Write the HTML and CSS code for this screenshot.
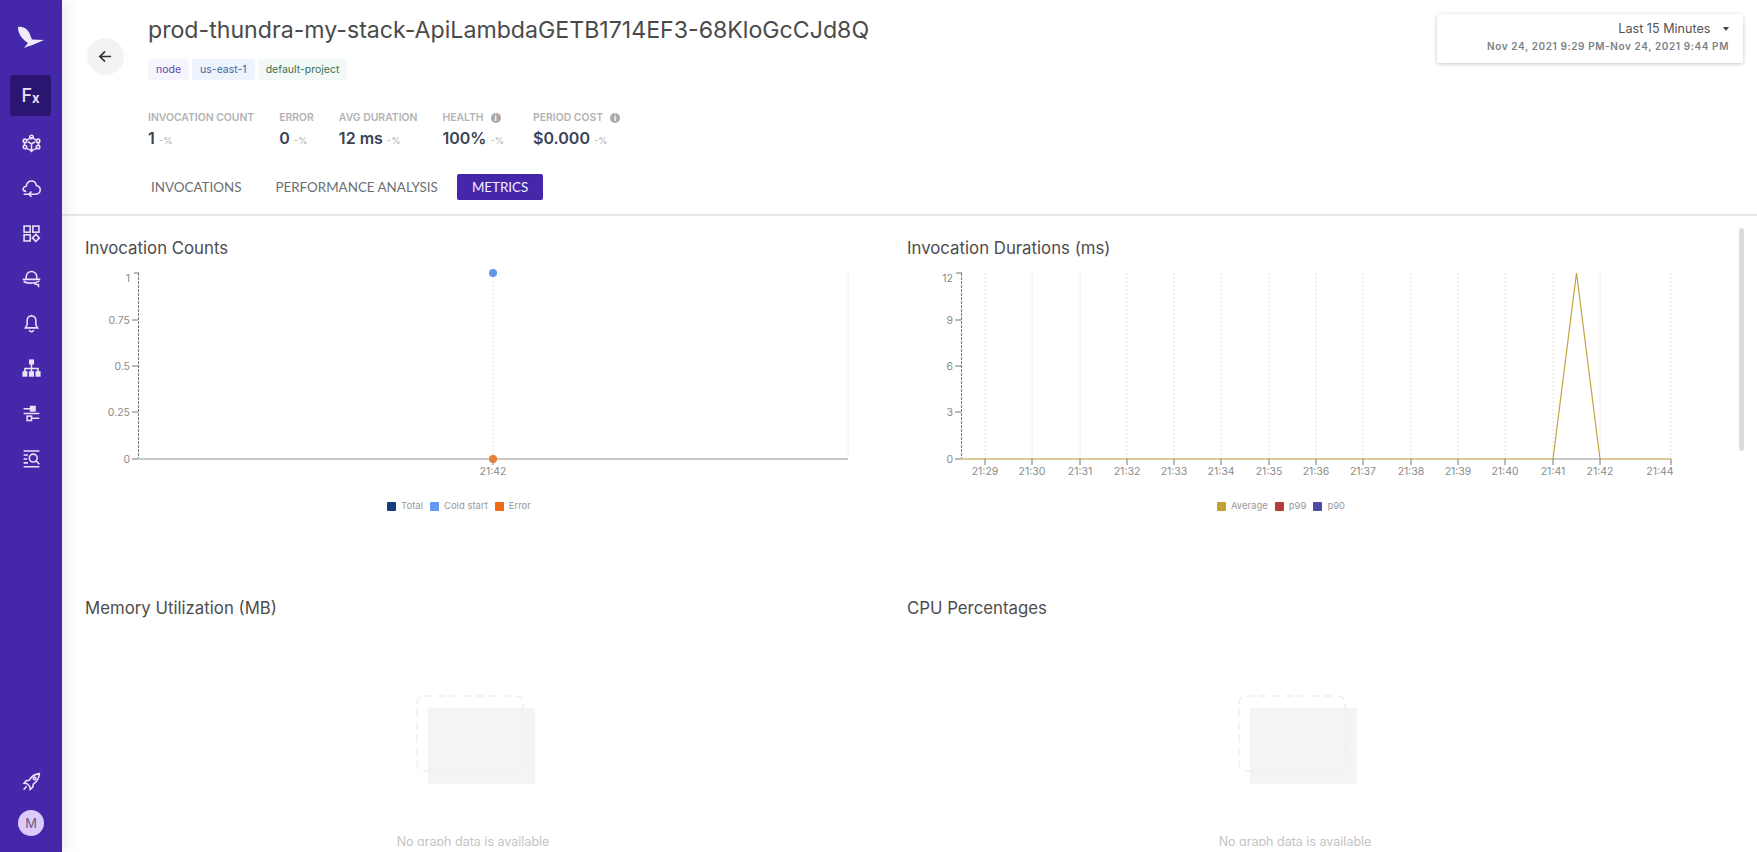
FILE: index.html
```html
<!DOCTYPE html>
<html lang="en">
<head>
    <meta charset="UTF-8">
    <meta name="viewport" content="width=device-width, initial-scale=1.0">
    <title>Function Metrics</title>
    <link rel="stylesheet" href="styles.css">
</head>
<body>
    <div class="app">
        <!-- Left navigation -->
        <nav class="sidebar">
            <svg class="logo" viewBox="0 0 26 22"><path d="M0 1C6 0 11 4 12.500 10L14 13.500 26 14C20 17 11 20 6 22L10 17C4 13 0 8 0 1Z"/></svg>
            <div class="fx-item">F<span>x</span></div>
            <a class="nav-item"><svg viewBox="0 0 24 24"><path d="M12 5l6 3.500M12 5L6 8.500M4 10v5M20 10v5M6.500 17.500L9 19M17.500 17.500L15 19"/><circle cx="12" cy="4.500" r="2"/><circle cx="4.500" cy="9" r="2"/><circle cx="19.500" cy="9" r="2"/><circle cx="4.500" cy="16" r="2"/><circle cx="19.500" cy="16" r="2"/><path d="M8 10l4 2.500 4-2.500M12 12.500V21M9.500 18.500L12 21l2.500-2.500"/></svg></a>
            <a class="nav-item"><svg viewBox="0 0 24 24"><path d="M6 15.500C3 15 2 13.500 2.500 12 3 10.500 4.500 9.500 6 9.500 6.500 6 9 3.500 12 3.500c3 0 5 2 5.500 5 2.500.5 4.500 2.500 4.500 5 0 3-2.500 5-5 5h-8"/><path d="M12 15.500L9 18.500l3 3M9 18.500H3"/></svg></a>
            <a class="nav-item"><svg viewBox="0 0 24 24"><rect x="3.500" y="3.500" width="7" height="7"/><rect x="13.500" y="3.500" width="7" height="7"/><rect x="3.500" y="13.500" width="7" height="7"/><path d="M17 13l4 4-4 4-4-4z"/></svg></a>
            <a class="nav-item"><svg viewBox="0 0 24 24"><path d="M6 13V10a6 6 0 0 1 12 0v3"/><path d="M2 13h20M3 15c3 3 12 3 18 0M15 18l5 1v3"/></svg></a>
            <a class="nav-item"><svg viewBox="0 0 24 24"><path d="M12 3.500c-3.500 0-5 2.500-5 5.500v4.500L5 17h14l-2-3.500V9c0-3-1.500-5.500-5-5.500zM12 2v1.500M9.500 19.500c.5 1.500 1.500 2 2.500 2s2-.5 2.500-2"/></svg></a>
            <a class="nav-item"><svg viewBox="0 0 24 24"><rect x="10" y="2.500" width="4" height="4" fill="currentColor"/><path d="M12 6.500V16M4.500 16v-4h15v4"/><rect x="2.500" y="16" width="4" height="4.500" fill="currentColor"/><rect x="10" y="16" width="4" height="4.500" fill="currentColor"/><rect x="17.500" y="16" width="4" height="4.500" fill="currentColor"/></svg></a>
            <a class="nav-item"><svg viewBox="0 0 24 24"><path d="M3 6.500h8M3 12h18M12 17.500h9"/><rect x="11" y="4" width="5" height="5" fill="currentColor"/><rect x="7" y="15" width="5" height="5"/></svg></a>
            <a class="nav-item"><svg viewBox="0 0 24 24"><path d="M3 3.500h18M3 8h5M3 12.500h4M3 17h5M3 21.500h18"/><circle cx="14" cy="11.500" r="4.500"/><path d="M17.500 15l3.500 3.500"/></svg></a>
            <a class="nav-item rocket"><svg viewBox="0 0 24 24"><path d="M21 3c-5 .5-9 3-11.500 7.500L6 11l-2.500 3 3.500.5 3 3 .5 3.500 3-2.500.5-3.500C18.500 12 20.500 8 21 3zM6.500 17.500L3 21.500"/><circle cx="15.500" cy="8.500" r="1.500"/></svg></a>
            <div class="avatar">M</div>
        </nav>

        <main class="main">
            <header class="page-header">
                <div class="header-top">
                    <button class="back-btn">
                        <svg viewBox="0 0 16 16"><path d="M14 8H2.500M7.500 2.500L2 8l5.500 5.500"/></svg>
                    </button>
                    <div class="title-block">
                        <h1>prod-thundra-my-stack-ApiLambdaGETB1714EF3-68KloGcCJd8Q</h1>
                        <div class="tags">
                            <span class="tag tag-runtime">node</span>
                            <span class="tag tag-region">us-east-1</span>
                            <span class="tag tag-project">default-project</span>
                        </div>
                    </div>
                    <div class="date-box">
                        <div class="date-range">Last 15 Minutes <span class="caret"></span></div>
                        <div class="date-detail">Nov 24, 2021 9:29 PM-Nov 24, 2021 9:44 PM</div>
                    </div>
                </div>

                <div class="stats">
                    <div class="stat">
                        <div class="stat-label">INVOCATION COUNT</div>
                        <div class="stat-value">1 <small>-%</small></div>
                    </div>
                    <div class="stat">
                        <div class="stat-label">ERROR</div>
                        <div class="stat-value">0 <small>-%</small></div>
                    </div>
                    <div class="stat">
                        <div class="stat-label">AVG DURATION</div>
                        <div class="stat-value">12 ms <small>-%</small></div>
                    </div>
                    <div class="stat stat-health">
                        <div class="stat-label">HEALTH <span class="info">i</span></div>
                        <div class="stat-value">100% <small>-%</small></div>
                    </div>
                    <div class="stat">
                        <div class="stat-label">PERIOD COST <span class="info">i</span></div>
                        <div class="stat-value">$0.000 <small>-%</small></div>
                    </div>
                </div>

                <div class="tabs">
                    <a class="tab">INVOCATIONS</a>
                    <a class="tab">PERFORMANCE ANALYSIS</a>
                    <a class="tab active">METRICS</a>
                </div>
            </header>

            <section class="content">
                <div class="panel">
                    <h2>Invocation Counts</h2>
                    <svg class="chart" viewBox="85 259 790 231">
                        <g class="grid">
                            <path d="M493 273V459M848 273V459"/>
                        </g>
                        <path class="axis-y" d="M138.500 273V459"/>
                        <path class="tick" d="M134 273h5M132 320h6M132 366h6M132 412h6M132 459h6"/>
                        <path class="axis-x" d="M138 459H848"/>
                        <g class="y-labels">
                            <text x="130" y="282">1</text>
                            <text x="130" y="324">0.75</text>
                            <text x="130" y="370">0.5</text>
                            <text x="130" y="416">0.25</text>
                            <text x="130" y="463">0</text>
                        </g>
                        <path class="tick" d="M493 459v6"/>
                        <circle cx="493" cy="273" r="4" fill="#6b94e6"/>
                        <circle cx="493" cy="459" r="4" fill="#e8813a"/>
                        <text class="x-label" x="493" y="475">21:42</text>
                    </svg>
                    <div class="legend">
                        <span class="legend-item"><i class="swatch swatch-total"></i>Total</span>
                        <span class="legend-item"><i class="swatch swatch-cold"></i>Cold start</span>
                        <span class="legend-item"><i class="swatch swatch-error"></i>Error</span>
                    </div>
                </div>

                <div class="panel">
                    <h2>Invocation Durations (ms)</h2>
                    <svg class="chart" viewBox="907 259 790 231">
                        <g class="grid">
                            <path d="M985 273V459M1032 273V459M1080 273V459M1127 273V459M1174 273V459M1221 273V459M1269 273V459M1316 273V459M1363 273V459M1411 273V459M1458 273V459M1505 273V459M1553 273V459M1600 273V459M1671 273V459"/>
                        </g>
                        <path class="axis-y" d="M961.500 273V459"/>
                        <path class="tick" d="M956 273h6M955 320h6M955 366h6M955 412h6M955 459h6"/>
                        <g class="y-labels">
                            <text x="953" y="282">12</text>
                            <text x="953" y="324">9</text>
                            <text x="953" y="370">6</text>
                            <text x="953" y="416">3</text>
                            <text x="953" y="463">0</text>
                        </g>
                        <path class="axis-x" d="M1553 459H1600"/>
                        <path class="series-base" d="M961 459H1553M1600 459H1671"/>
                        <path class="tick" d="M985 459v6M1032 459v6M1080 459v6M1127 459v6M1174 459v6M1221 459v6M1269 459v6M1316 459v6M1363 459v6M1411 459v6M1458 459v6M1505 459v6M1553 459v6M1600 459v6M1671 459v6"/>
                        <path class="series-line" d="M1553 459L1576.500 273 1600 459"/>
                        <g class="x-labels">
                            <text x="985" y="475">21:29</text>
                            <text x="1032" y="475">21:30</text>
                            <text x="1080" y="475">21:31</text>
                            <text x="1127" y="475">21:32</text>
                            <text x="1174" y="475">21:33</text>
                            <text x="1221" y="475">21:34</text>
                            <text x="1269" y="475">21:35</text>
                            <text x="1316" y="475">21:36</text>
                            <text x="1363" y="475">21:37</text>
                            <text x="1411" y="475">21:38</text>
                            <text x="1458" y="475">21:39</text>
                            <text x="1505" y="475">21:40</text>
                            <text x="1553" y="475">21:41</text>
                            <text x="1600" y="475">21:42</text>
                            <text x="1660" y="475">21:44</text>
                        </g>
                    </svg>
                    <div class="legend">
                        <span class="legend-item"><i class="swatch swatch-avg"></i>Average</span>
                        <span class="legend-item"><i class="swatch swatch-p99"></i>p99</span>
                        <span class="legend-item"><i class="swatch swatch-p90"></i>p90</span>
                    </div>
                </div>

                <div class="panel">
                    <h2>Memory Utilization (MB)</h2>
                    <div class="empty">
                        <svg class="empty-art" viewBox="0 0 120 90"><rect x="12" y="13" width="107" height="76" fill="#f4f4f4"/><rect x="1" y="1" width="106" height="75" rx="7" class="empty-dash"/></svg>
                        <p>No graph data is available</p>
                    </div>
                </div>

                <div class="panel">
                    <h2>CPU Percentages</h2>
                    <div class="empty">
                        <svg class="empty-art" viewBox="0 0 120 90"><rect x="12" y="13" width="107" height="76" fill="#f4f4f4"/><rect x="1" y="1" width="106" height="75" rx="7" class="empty-dash"/></svg>
                        <p>No graph data is available</p>
                    </div>
                </div>

                <div class="scroll-thumb"></div>
            </section>
        </main>
    </div>
</body>
</html>
```

FILE: styles.css
```css
* {
    box-sizing: border-box;
}

body {
    margin: 0;
    font-family: Inter, "Liberation Sans", sans-serif;
    background-color: #fff;
    overflow: hidden;
}

.app {
    display: flex;
    height: 100vh;
}

/* Sidebar */
.sidebar {
    width: 62px;
    flex-shrink: 0;
    background-color: #4527a9;
    box-shadow: 3px 0 14px rgba(0, 0, 0, 0.1);
    display: flex;
    flex-direction: column;
    align-items: center;
    color: #e8e1f8;
    z-index: 2;
}

.logo {
    width: 26px;
    height: 22px;
    margin-top: 26px;
    margin-bottom: 27px;
    fill: #f1ecfb;
}

.fx-item {
    width: 41px;
    height: 41px;
    margin-right: 1px;
    background-color: #2a1670;
    border-radius: 3px;
    display: flex;
    align-items: center;
    justify-content: center;
    font-size: 18px;
    font-weight: 500;
    margin-bottom: 5px;
}

.fx-item span {
    font-size: 13px;
    font-weight: 700;
    margin-top: 4px;
}

.nav-item {
    width: 45px;
    height: 45px;
    display: flex;
    align-items: center;
    justify-content: center;
}

.nav-item svg {
    width: 21px;
    height: 21px;
    fill: none;
    stroke: currentColor;
    stroke-width: 1.800;
}

.rocket {
    margin-top: auto;
}

.avatar {
    width: 26px;
    height: 26px;
    border-radius: 50%;
    background-color: #dccafb;
    color: #6a5a80;
    font-size: 13px;
    display: flex;
    align-items: center;
    justify-content: center;
    margin-top: 6px;
    margin-bottom: 16px;
}

/* Main */
.main {
    flex: 1;
    min-width: 0;
    display: flex;
    flex-direction: column;
}

.page-header {
    height: 216px;
    flex-shrink: 0;
    border-bottom: 2px solid #e8e7ee;
    padding-left: 25px;
}

.header-top {
    display: flex;
    align-items: flex-start;
    height: 97px;
    padding-right: 14px;
}

.back-btn {
    width: 37px;
    height: 37px;
    border: none;
    border-radius: 50%;
    background-color: #f3f3f3;
    margin-top: 38px;
    margin-right: 24px;
    padding: 0;
    display: flex;
    align-items: center;
    justify-content: center;
}

.back-btn svg {
    width: 15px;
    height: 15px;
    fill: none;
    stroke: #333;
    stroke-width: 1.800;
}

.title-block {
    padding-top: 12px;
}

h1 {
    margin: 0;
    font-size: 23.150px;
    line-height: 36px;
    font-weight: 400;
    color: #4a4a4a;
}

.tags {
    display: flex;
    gap: 3px;
    margin-top: 11px;
}

.tag {
    font-size: 10.500px;
    height: 21px;
    line-height: 21px;
    padding: 0 8px;
    border-radius: 3px;
}

.tag-runtime {
    background-color: #f6f4fd;
    color: #5b48ad;
}

.tag-region {
    background-color: #edf4fd;
    color: #44649f;
}

.tag-project {
    background-color: #f2f9f6;
    color: #3c6f58;
}

.date-box {
    margin-left: auto;
    margin-top: 14px;
    width: 306px;
    height: 49px;
    border-radius: 2px;
    background-color: #fff;
    box-shadow: 0 1px 4px rgba(0, 0, 0, 0.22);
    text-align: right;
    padding: 6px 14px;
}

.date-range {
    font-size: 12.600px;
    line-height: 17px;
    color: #555;
}

.caret {
    display: inline-block;
    width: 0;
    height: 0;
    margin-left: 9px;
    margin-bottom: 2px;
    border-left: 3.500px solid transparent;
    border-right: 3.500px solid transparent;
    border-top: 4px solid #444;
}

.date-detail {
    font-size: 10px;
    line-height: 14px;
    font-weight: 600;
    letter-spacing: 0.6px;
    color: #7c7f86;
    margin-top: 2px;
}

/* Stats */
.stats {
    display: flex;
    gap: 25px;
    margin-left: 61px;
    margin-top: 14px;
}

.stat-health {
    margin-right: 4px;
}

.stat-label {
    font-size: 10.400px;
    line-height: 14px;
    font-weight: 600;
    color: #b3b3b3;
    display: flex;
    align-items: center;
    gap: 7px;
}

.info {
    width: 10px;
    height: 10px;
    border-radius: 50%;
    background-color: #a9a9a9;
    color: #fff;
    font-size: 8px;
    line-height: 10px;
    font-weight: 700;
    text-align: center;
}

.stat-value {
    font-size: 16px;
    line-height: 22px;
    font-weight: 600;
    color: #3b4256;
    margin-top: 2px;
}

.stat-value small {
    font-size: 9.500px;
    font-weight: 400;
    color: #b3b3b3;
}

/* Tabs */
.tabs {
    display: flex;
    align-items: center;
    gap: 4px;
    margin-left: 49px;
    margin-top: 22px;
}

.tab {
    font-family: Lato, "Liberation Sans", sans-serif;
    font-size: 13.400px;
    line-height: 26px;
    height: 26px;
    padding: 0 15px;
    color: #6b6f74;
}

.tab.active {
    background-color: #4527a9;
    color: #f3effc;
    border-radius: 2px;
}

/* Charts */
.content {
    position: relative;
    flex: 1;
    min-height: 0;
    margin-bottom: 6px;
    overflow: hidden;
    display: grid;
    grid-template-columns: 822px 1fr;
    grid-auto-rows: 360px;
    padding-left: 23px;
    padding-top: 22px;
}

h2 {
    margin: 0;
    font-size: 16.800px;
    line-height: 21px;
    font-weight: 400;
    color: #4d4d4d;
}

.chart {
    display: block;
    width: 790px;
    height: 231px;
}

.chart text {
    font-size: 10.500px;
    fill: #8a8a8a;
}

.grid path {
    stroke: #e2e2e2;
    stroke-dasharray: 2 2;
    fill: none;
}

.axis-y {
    stroke: #777;
    stroke-dasharray: 3 1;
    fill: none;
}

.axis-x {
    stroke: #c9c9c9;
    stroke-width: 2;
    fill: none;
}

.tick {
    stroke: #777;
    fill: none;
}

.series-base {
    stroke: #dcc998;
    stroke-width: 2;
    fill: none;
}

.series-line {
    stroke: #bfa341;
    stroke-width: 1.200;
    fill: none;
}

.y-labels text {
    text-anchor: end;
}

.x-label,
.x-labels text {
    text-anchor: middle;
}

.legend {
    width: 748px;
    display: flex;
    justify-content: center;
    gap: 7px;
    margin-top: 9px;
}

.legend-item {
    display: flex;
    align-items: center;
    gap: 5px;
    font-size: 9.500px;
    line-height: 14px;
    color: #999;
}

.swatch {
    width: 9px;
    height: 9px;
    border-radius: 1px;
}

.swatch-total {
    background-color: #123f80;
}

.swatch-cold {
    background-color: #6496f2;
}

.swatch-error {
    background-color: #f26a13;
}

.swatch-avg {
    background-color: #c2a232;
}

.swatch-p99 {
    background-color: #b43c3c;
}

.swatch-p90 {
    background-color: #4b4aa8;
}

/* Empty graph */
.empty {
    width: 776px;
    display: flex;
    flex-direction: column;
    align-items: center;
    margin-top: 76px;
}

.empty-art {
    width: 120px;
    height: 90px;
    margin-left: 5px;
}

.empty-dash {
    fill: none;
    stroke: #efefef;
    stroke-width: 1.500;
    stroke-dasharray: 8 5;
}

.empty p {
    margin: 49px 0 0 0;
    font-size: 12.500px;
    line-height: 16px;
    color: #c4c4c4;
}

.scroll-thumb {
    position: absolute;
    top: 12px;
    right: 13px;
    width: 5px;
    height: 223px;
    border-radius: 3px;
    background-color: #dcdcdc;
}
```
